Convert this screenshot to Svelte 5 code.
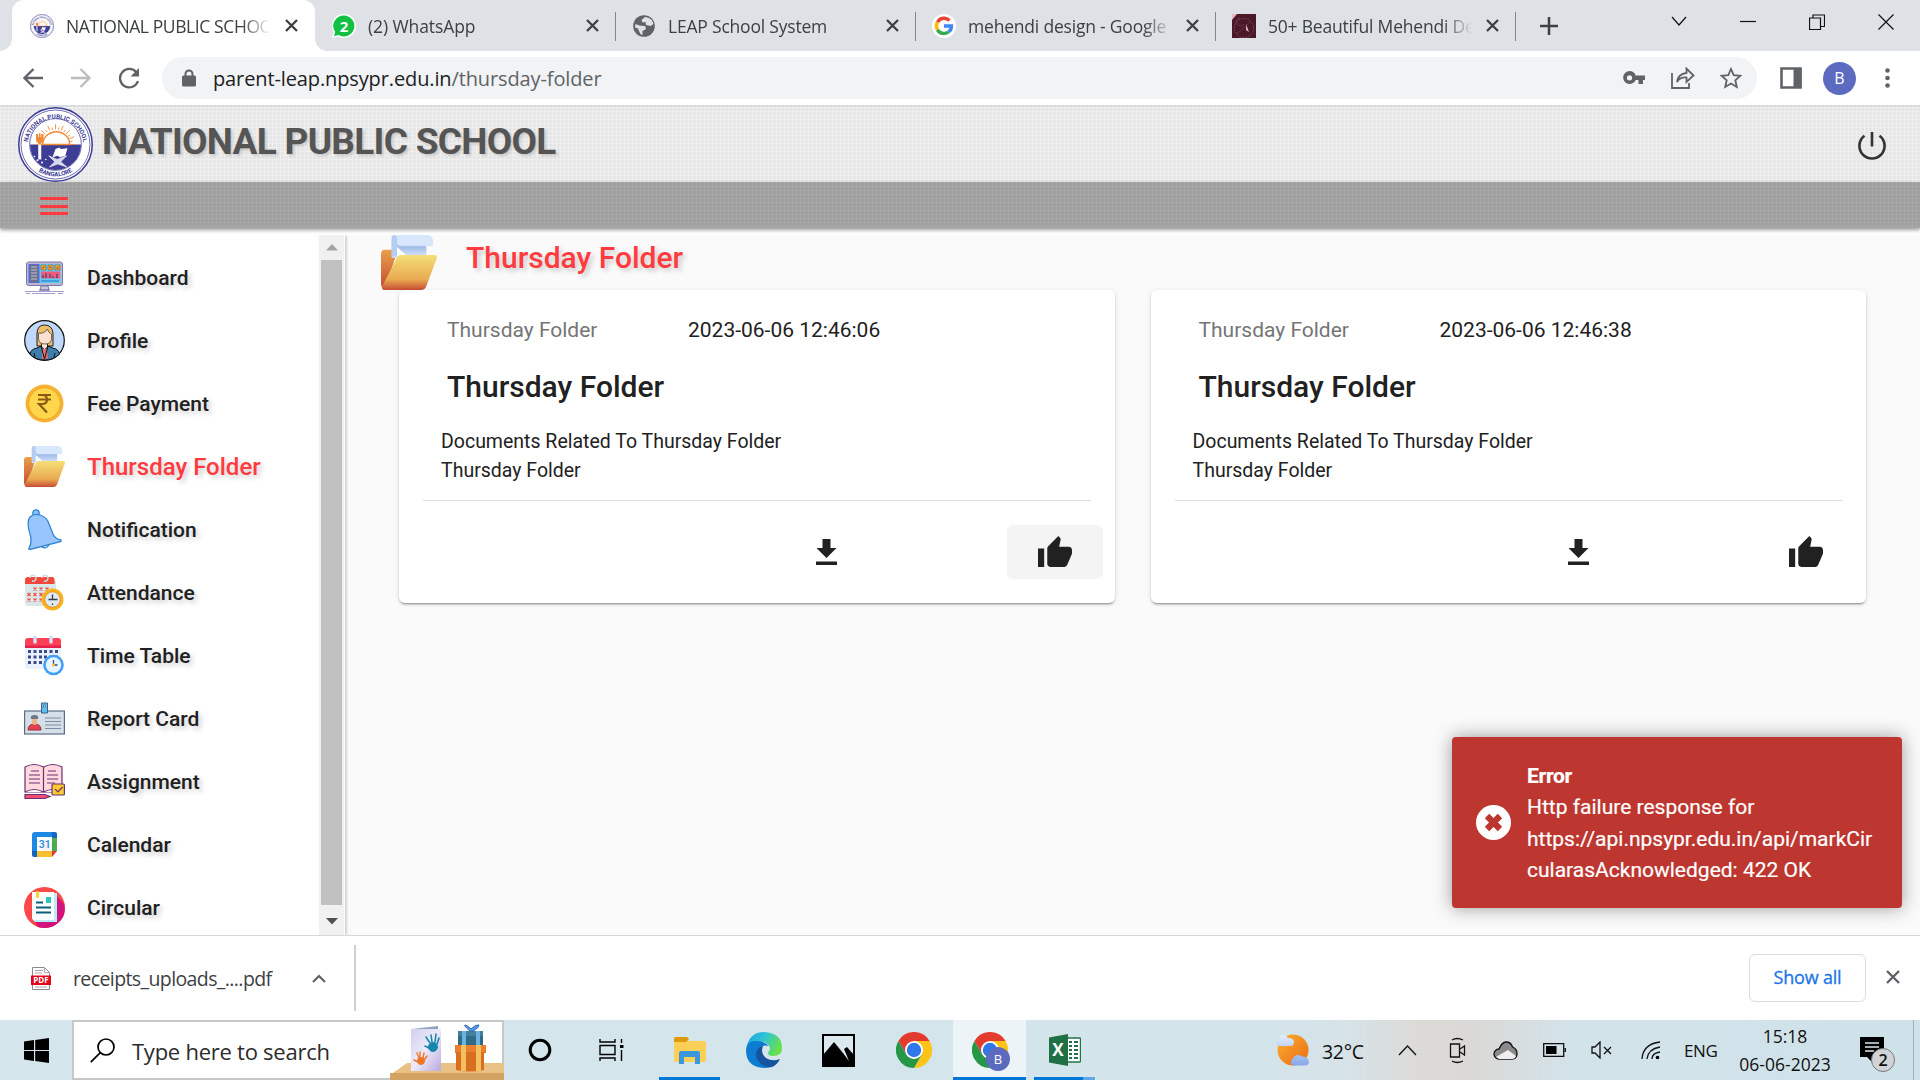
<script>
  const tabs = [
    { icon: 'school', title: 'NATIONAL PUBLIC SCHOO', active: true, kind: 't1' },
    { icon: 'whatsapp', title: '(2) WhatsApp', kind: 't2' },
    { icon: 'globe', title: 'LEAP School System', kind: 't3' },
    { icon: 'google', title: 'mehendi design - Google', kind: 't4' },
    { icon: 'mehendi', title: '50+ Beautiful Mehendi De', kind: 't5' }
  ];
  const menu = [
    { id: 'dashboard', label: 'Dashboard' },
    { id: 'profile', label: 'Profile' },
    { id: 'fee', label: 'Fee Payment' },
    { id: 'folder', label: 'Thursday Folder', active: true },
    { id: 'bell', label: 'Notification' },
    { id: 'attendance', label: 'Attendance' },
    { id: 'timetable', label: 'Time Table' },
    { id: 'report', label: 'Report Card' },
    { id: 'assignment', label: 'Assignment' },
    { id: 'calendar', label: 'Calendar' },
    { id: 'circular', label: 'Circular' }
  ];
  const cards = [
    { date: '2023-06-06 12:46:06', hovered: true },
    { date: '2023-06-06 12:46:38', hovered: false }
  ];
  const rays = Array.from({ length: 17 }, (_, i) => {
    const a = Math.PI + (i * Math.PI) / 16;
    const r = i % 2 ? 23 : 27;
    return [50 + 20 * Math.cos(a), 50 + 20 * Math.sin(a), 50 + r * Math.cos(a), 50 + r * Math.sin(a)];
  });
</script>

{#snippet crest()}
  <svg class="crest" viewBox="0 0 100 100">
    <circle cx="50" cy="50" r="49" fill="#fff" stroke="#3d3d96" stroke-width="2" />
    <circle cx="50" cy="50" r="46" fill="none" stroke="#3d3d96" stroke-width="1" />
    <circle cx="50" cy="50" r="34.5" fill="#fff" stroke="#3d3d96" stroke-width="1" />
    <path d="M16 50h68a34 34 0 0 1-68 0z" fill="#3d3d96" />
    <path d="M33 50a18 17 0 0 1 36 0z" fill="#fff" stroke="#f08a35" stroke-width="2" />
    {#each rays as r}
      <line x1={r[0]} y1={r[1]} x2={r[2]} y2={r[3]} stroke="#f08a35" stroke-width="1.2" />
    {/each}
    <path d="M24 36v7q0 4 3 5v3h4v-3q3-1 3-5v-7h-3v4h-1v-5h-2v5h-1v-4z" fill="#f08a35" />
    <path d="M27 50h4v20h-4z" fill="#fff" />
    <path d="M50 56l5-2 2 2 9-1-3 10-7 2-3-2-7 2z" fill="#fff" />
    <path d="M41 65l11 5 13-5-8 8 8 7-12-4-11 4 7-7z" fill="#d6d6ea" stroke="#fff" stroke-width=".8" />
    <circle cx="26" cy="71" r="1.3" fill="#fff" /><circle cx="32" cy="74" r="1.3" fill="#fff" />
    <circle cx="37" cy="70" r="1.1" fill="#fff" /><circle cx="22" cy="66" r="1.1" fill="#fff" />
    <defs>
      <path id="arcTop" d="M12.500 53a37.500 37.500 0 1 1 75 0" />
      <path id="arcBottom" d="M7.500 50a42.500 42.500 0 0 0 85 0" />
    </defs>
    <text class="crest-text"><textPath href="#arcTop" startOffset="50%">NATIONAL PUBLIC SCHOOL</textPath></text>
    <text class="crest-text"><textPath href="#arcBottom" startOffset="50%">BANGALORE</textPath></text>
  </svg>
{/snippet}

{#snippet crossIcon()}
  <svg width="13" height="13" viewBox="0 0 13 13" stroke="#3c4043" stroke-width="2.3"><path d="M1 1l11 11M12 1L1 12" /></svg>
{/snippet}

{#snippet folder()}
  <svg viewBox="0 0 42 41" preserveAspectRatio="none">
    <defs>
      <linearGradient id="fFront" x1="0" y1="0" x2="0" y2="1"><stop offset="0" stop-color="#f4df78" /><stop offset=".7" stop-color="#e9a950" /><stop offset="1" stop-color="#c94b33" /></linearGradient>
      <linearGradient id="fBack" x1="0" y1="0" x2="0" y2="1"><stop offset="0" stop-color="#eaa04c" /><stop offset="1" stop-color="#c3492f" /></linearGradient>
      <linearGradient id="fPaper" x1="0" y1="0" x2="0" y2="1"><stop offset="0" stop-color="#eef5ff" /><stop offset=".55" stop-color="#a3bfea" /><stop offset="1" stop-color="#dfe9fb" /></linearGradient>
    </defs>
    <path d="M0 14q0-3 3-3h5l3 5-8 24q-3 0-3-4z" fill="url(#fBack)" />
    <path d="M8 2q0-2 2-2h24q4 0 5 4v4H34v9H8z" fill="url(#fPaper)" />
    <path d="M11 0h23q4 0 5 4v4H15q-4 0-3-5z" fill="#d8e7fc" />
    <path d="M8 2q0-2 2-2t2 3v13H8z" fill="#b5cdf2" />
    <path d="M12 9l8 7h-8z" fill="#fff" />
    <path d="M12 17q.5-2 3-2h26q1 0 1 2l-8 21q-1 3-4 3H3q-3 0-2-3z" fill="url(#fFront)" />
  </svg>
{/snippet}

{#snippet menuIcon(id)}
  {#if id === 'folder'}
    {@render folder()}
  {:else if id === 'dashboard'}
    <svg viewBox="0 0 41 41">
      <rect x="2.500" y="5" width="36" height="23.500" rx="2" fill="#b9b7d4" stroke="#7d74a8" />
      <rect x="4.500" y="7" width="32" height="19" fill="#5ccdf5" />
      <rect x="4.500" y="7" width="11" height="19" fill="#5b6bd0" />
      <rect x="6" y="8" width="8" height="17" fill="#6c6f8c" />
      <path d="M7 10h6M7 13h6M7 16h6M7 19h6M7 22h6" stroke="#c6c6d8" />
      <path d="M17 8h5v5h-5zM24 8h5v5h-5zM31 8h5v5h-5z" fill="#f5a52b" stroke="#7a5a4a" stroke-width=".6" />
      <path d="M18.500 11l2-1M25.500 10l2 1M32.500 11h2" stroke="#5a4468" />
      <rect x="17" y="14.500" width="19" height="7" fill="#f15b78" />
      <path d="M19 21v-3M22 21v-5M26 21v-4M29 21v-2M33 21v-4" stroke="#5c4a80" stroke-width="1.500" />
      <path d="M17 24h18" stroke="#3e8fd8" stroke-width="1.600" />
      <path d="M17 29h7l1 4H16zM15 33h11" fill="#c9c7dd" stroke="#7d74a8" />
      <path d="M1 34.500h39M2 36.500h4M8 36.500h23M34 36.500h5" stroke="#8f86bb" stroke-width=".8" />
    </svg>
  {:else if id === 'profile'}
    <svg viewBox="0 0 41 41">
      <circle cx="20.500" cy="20.500" r="19.800" fill="#bfd8fb" stroke="#111" stroke-width="1.200" />
      <path d="M13 26V14q0-9 7.500-9T29 13v13z" fill="#efc06b" stroke="#222" />
      <path d="M17.500 20h6v11h-6z" fill="#fde2d3" stroke="#222" />
      <path d="M14.500 13q6 1 9-4 1 4 4 5v4q0 6-6.500 6T14.500 18z" fill="#fde0cf" stroke="#333" stroke-width=".7" />
      <path d="M6 34q1-5 7-6l4-2 3.500 4 4-4 4 2q6 1 7 6-6 6-15 6T6 34z" fill="#3f7fab" stroke="#111" />
      <path d="M18 29h5l1 10h-6z" fill="#e26e78" /><path d="M17 26l3.500 13L24 26M10 33l1 4M31 33l-1 4" fill="none" stroke="#111" />
    </svg>
  {:else if id === 'fee'}
    <svg viewBox="0 0 41 41">
      <circle cx="20.500" cy="20.500" r="19" fill="#f9b233" /><circle cx="20.500" cy="20.500" r="16" fill="#fdd64b" stroke="#eda32c" />
      <path d="M14 12h13M14 16.500h13M15 12h3q5 0 5 4.500T18 21h-3l8 8.500" fill="none" stroke="#8a5a12" stroke-width="2.200" />
    </svg>
  {:else if id === 'bell'}
    <svg viewBox="0 0 41 41" stroke="#2f86d1" stroke-width="1.300">
      <path d="M17 37a4.500 4.500 0 0 0 8-2" fill="#fff" />
      <circle cx="12" cy="4" r="3.200" fill="#8fc0fb" />
      <path d="M5 39q3-5 1.500-12Q2 13 6 8q4-4 10-2 7 2 9 9l4 10q2 5 8 6v1.500L6 40.500q-2 0-1-1.500z" fill="#99c5ff" />
    </svg>
  {:else if id === 'attendance'}
    <svg viewBox="0 0 41 41">
      <path d="M1 9h31v25H4q-3 0-3-3z" fill="#d9e8ea" /><path d="M4 5h24q2.500 0 2.500 3v4H1V8q0-3 3-3z" fill="#f0493a" />
      <path d="M8 9a3 3 0 1 0-2-3M20 9a3 3 0 1 0-2-3" fill="none" stroke="#c9dde6" stroke-width="1.400" />
      {#each [[10, 17], [16, 17], [22, 17], [4, 22.5], [10, 22.5], [16, 22.5], [4, 28], [10, 28], [16, 28]] as p}
        <path d="M{p[0] - 0.500} {p[1] - 1.500}l3 3m0-3l-3 3" stroke="#ef5245" stroke-width="1.300" />
      {/each}
      <circle cx="28.500" cy="27.500" r="11" fill="#fbb21c" /><circle cx="28.500" cy="27.500" r="7.800" fill="#dfe9f0" stroke="#e58d1f" />
      <path d="M28.500 22.500v5h5M28.500 27.500h-4M28.500 31.500v1.500" stroke="#333a4d" stroke-width="1.300" fill="none" />
    </svg>
  {:else if id === 'timetable'}
    <svg viewBox="0 0 41 41">
      <rect x="1" y="4" width="36" height="30" rx="3" fill="#e9f1ff" /><path d="M4 3h30q3 0 3 3v7H1V6q0-3 3-3z" fill="#ff4057" /><path d="M1 10.500h36V13H1z" fill="#e5204a" />
      <path d="M11 2v5M27 2v5" stroke="#cfe0f8" stroke-width="3.500" stroke-linecap="round" />
      {#each [15, 20.5, 26] as y}
        {#each [4, 9.5, 15, 20, 25.500, 31] as x}
          {#if x < 20 || y < 26}<rect {x} {y} width="3" height="3" fill="#3b4a86" />{/if}
        {/each}
      {/each}
      <circle cx="29.500" cy="30" r="10.300" fill="#3fa0f5" /><circle cx="29.500" cy="30" r="7.700" fill="#e8f4ff" />
      <path d="M29.500 25v5h4" stroke="#2c4f87" fill="none" stroke-width="1.300" /><circle cx="29.500" cy="30" r="1.500" fill="#f6c52c" />
    </svg>
  {:else if id === 'report'}
    <svg viewBox="0 0 41 41">
      <rect x=".6" y="13" width="39.800" height="23" fill="#d5dfe7" stroke="#5c6e87" stroke-width="1.200" />
      <path d="M17.500 5h6v10h-6z" fill="#5fc1ef" stroke="#3b5f88" /><rect x="19.500" y="7" width="2" height="2" fill="#fff" stroke="#2f4a70" stroke-width=".6" />
      <path d="M4 32q0-6 6.500-6T17 32z" fill="#e8414e" stroke="#8f3540" /><path d="M8 20h5v5q0 2-2.500 2T8 25z" fill="#edb98a" /><path d="M7 21q-1-4 3.500-4t3.500 4z" fill="#6d7689" />
      <path d="M21 20h16M21 23.500h16M21 27h16M21 30.500h16" stroke="#7c8ba0" />
    </svg>
  {:else if id === 'assignment'}
    <svg viewBox="0 0 41 41" stroke="#6d2f74" stroke-width="1.200">
      <path d="M1 6Q10 1 19.500 6 29 1 38 6v25H1z" fill="#ffd9de" /><path d="M1 31q9-5 18.500 0Q29 26 38 31" fill="#fff" />
      <path d="M19.500 6v25M7 10h8M5 14h11M5 18h11M5 22h11M24 10h8M23 14h11M23 18h11M23 22h8" fill="none" />
      <rect x="28" y="23" width="12.400" height="11" rx="1" fill="#fccb2f" /><path d="M31 28l3 3 4.500-5" fill="none" />
      <path d="M1 33.500h20l5 2-5 2H1z" fill="#f54d71" />
    </svg>
  {:else if id === 'calendar'}
    <svg viewBox="0 0 41 41">
      <path d="M8 11q0-3 3-3h17v6H14v14H8z" fill="#1e88e5" /><path d="M28 8h3q2 0 2 2v4h-5z" fill="#1565c0" />
      <path d="M28 14h5v13h-5z" fill="#4caf50" /><path d="M13 27h15v6H13z" fill="#fbc02d" /><path d="M8 27h5v6h-3q-2 0-2-2z" fill="#1565c0" /><path d="M28 27h5l-5 6z" fill="#e53935" />
      <path d="M13 13h15v14H13z" fill="#fff" />
      <text class="day" x="20.700" y="24">31</text>
    </svg>
  {:else}
    <svg viewBox="0 0 41 41">
      <circle cx="20.500" cy="20.500" r="20.500" fill="#fb4849" /><path d="M33 9l7 8q3 12-6 19-8 7-20 4l-3-5z" fill="#d3137b" />
      <path d="M9 6h24v29H11l-2-2z" fill="#b9ecf5" /><path d="M8 5h22v28H10q-2 0-2-2z" fill="#fafdff" />
      <path d="M12 4h3v6q-1.500 2-3 0z" fill="#fdd32f" /><rect x="22" y="10" width="5" height="6" fill="#2ec7be" />
      <path d="M12 15.500h7M12 20.500h15M12 25.500h15" stroke="#0d5f78" stroke-width="2" />
    </svg>
  {/if}
{/snippet}

{#snippet chrome()}
  <svg width="36" height="36" viewBox="0 0 36 36">
    <path d="M18 9h15.600A18 18 0 0 1 18 36l7.800-13.500z" fill="#fcc419" />
    <path d="M2.400 9A18 18 0 0 1 33.600 9H18L10.200 22.500z" fill="#e33b2e" />
    <path d="M2.400 9l7.800 13.500L18 27l7.800-4.500L18 36A18 18 0 0 1 2.400 9z" fill="#269747" />
    <circle cx="18" cy="18" r="9" fill="#fff" /><circle cx="18" cy="18" r="7.200" fill="#2e78ea" />
  </svg>
{/snippet}

<div class="screen">
  <div class="tabstrip">
    {#each tabs as tab}
      <div class="tab" class:active={tab.active}>
        <span class="fav">
          {#if tab.icon === 'school'}
            {@render crest()}
          {:else if tab.icon === 'whatsapp'}
            <svg viewBox="0 0 24 24"><path d="M12 0a12 12 0 1 1-6 22.400L0 24l1.600-6A12 12 0 0 1 12 0z" fill="#fff" /><path d="M12 1.500A10.500 10.500 0 1 1 6.500 21L2 22.300 3.200 18A10.500 10.500 0 0 1 12 1.500z" fill="#12c043" /><text class="wa" x="12" y="17.500">2</text></svg>
          {:else if tab.icon === 'globe'}
            <svg viewBox="0 0 24 24"><circle cx="12" cy="12" r="10.800" fill="#5f6368" /><path d="M3.500 10l4 1.500 5 .5q2 1 1 3.500l-3 1.500v4q-3-1-3.500-4l-1-2.500-3-1zM13 3l-3.500 3 1 2.500 3-.5.500 3 4.500 1 3-2q-1-6-8.500-7z" fill="#dee1e6" /></svg>
          {:else if tab.icon === 'google'}
            <svg viewBox="0 0 24 24"><circle cx="12" cy="12" r="12" fill="#fff" />
              <g fill="none" stroke-width="3.400"><path d="M17.500 6.500A7.500 7.500 0 0 0 5.500 8.200" stroke="#ea4335" /><path d="M5.500 8.200a7.500 7.500 0 0 0 0 7.600" stroke="#fbbc05" /><path d="M5.500 15.800a7.500 7.500 0 0 0 11.300 2" stroke="#34a853" /><path d="M16.800 17.800A7.300 7.300 0 0 0 19.500 12H12" stroke="#4285f4" /></g></svg>
          {:else}
            <svg viewBox="0 0 24 24"><rect width="24" height="24" fill="#4a1828" /><path d="M0 0h5L0 6zM14 10l3 8-3-2z" fill="#e8b9bb" /><circle cx="12" cy="14" r="9.500" fill="none" stroke="#8a5260" stroke-dasharray="1.500 1.500" /><path d="M8 4a4 4 0 1 0 4 6M5 20l14-13" stroke="#6f3848" fill="none" /></svg>
          {/if}
        </span>
        <span class="tab-title {tab.kind}">{tab.title}</span>
        <span class="tab-close">{@render crossIcon()}</span>
      </div>
    {/each}
    <svg class="plus" width="18" height="18" viewBox="0 0 18 18" stroke="#3c4043" stroke-width="2.500"><path d="M9 0v18M0 9h18" /></svg>
    <div class="controls">
      <svg width="16" height="16" viewBox="0 0 16 16"><path d="M1 3l7 8 7-8" /></svg>
      <svg width="16" height="16" viewBox="0 0 16 16"><path d="M0 7.500h16" /></svg>
      <svg width="16" height="16" viewBox="0 0 16 16"><path d="M.5 4h11v11.500H.500zM4 4V1h11.500v11.500H12" /></svg>
      <svg width="16" height="16" viewBox="0 0 16 16"><path d="M.5 .5l15 15M15.500 .5l-15 15" /></svg>
    </div>
  </div>

  <div class="toolbar">
    <svg width="20" height="20" viewBox="0 0 20 20" class="ln dark"><path d="M20 10H2M10.500 1L1.500 10l9 9" /></svg>
    <svg width="20" height="20" viewBox="0 0 20 20" class="ln light"><path d="M0 10h18M9.500 1l9 9-9 9" /></svg>
    <svg width="22" height="22" viewBox="0 0 22 22" class="ln dark"><path d="M18.500 5.500a9.200 9.200 0 1 0 1.500 8.500" /><path d="M21 1v8.500h-8.500z" fill="#5f6368" stroke="none" /></svg>
    <div class="omnibox">
      <svg width="14" height="18" viewBox="0 0 14 18"><path d="M3.500 7V5a3.500 3.500 0 0 1 7 0v2" fill="none" stroke="#5f6368" stroke-width="2" /><rect y="6.500" width="14" height="11" rx="1.500" fill="#5f6368" /></svg>
      <span class="url">parent-leap.npsypr.edu.in<span class="path">/thursday-folder</span></span>
      <span class="omni-icons">
        <svg width="23" height="14" viewBox="0 0 23 14"><path d="M6.500 0a6.500 6.500 0 0 1 6.200 4.500H22V9h-2v4h-4.500V9h-2.800A6.500 6.500 0 1 1 6.500 0zm0 4.200a2.600 2.600 0 1 0 0 5.200 2.600 2.600 0 0 0 0-5.200z" fill="#5f6368" /></svg>
        <svg width="24" height="22" viewBox="0 0 24 22" class="ln thin"><path d="M1 6v15h17v-5M6 15q1-8 9.500-9V1.500l7 7-7 6.500v-4.500Q9 10 6 15z" /></svg>
        <svg width="22" height="22" viewBox="0 0 22 22" class="ln thin"><path d="M11 2l2.700 6.200 6.600.6-5 4.500 1.500 6.700L11 16.500 5.200 20l1.500-6.700-5-4.500 6.600-.6z" /></svg>
      </span>
    </div>
    <svg class="panel" width="22" height="22" viewBox="0 0 22 22"><path d="M1.500 1.500h19v19h-19z" fill="#fff" stroke="#5f6368" stroke-width="2.600" /><path d="M13.500 1h8v20h-8z" fill="#5f6368" /></svg>
    <span class="avatar">B</span>
    <svg class="dots" width="5" height="20" viewBox="0 0 5 20" fill="#5f6368"><circle cx="2.500" cy="2.500" r="2.300" /><circle cx="2.500" cy="10" r="2.300" /><circle cx="2.500" cy="17.500" r="2.300" /></svg>
  </div>

  <header class="school">
    <div class="badge">{@render crest()}</div>
    <h1>NATIONAL PUBLIC SCHOOL</h1>
    <svg class="power" width="30" height="30" viewBox="0 0 30 30" fill="none" stroke="#333" stroke-width="2.600"><path d="M15 1v14.500M7.500 4.800a12.600 12.600 0 1 0 15 0" /></svg>
  </header>
  <div class="greybar"><span class="burger"><i></i><i></i><i></i></span></div>

  <div class="body">
    <nav>
      <ul>
        {#each menu as item}
          <li class:active={item.active}><span class="ico">{@render menuIcon(item.id)}</span>{item.label}</li>
        {/each}
      </ul>
      <div class="scroll">
        <svg width="12" height="7" viewBox="0 0 12 7"><path d="M6 0l6 6.500H0z" fill="#a3a3a3" /></svg>
        <div class="thumb"></div>
        <svg width="12" height="7" viewBox="0 0 12 7"><path d="M6 6.500L12 0H0z" fill="#505050" /></svg>
      </div>
    </nav>
    <main>
      <div class="heading"><span class="big">{@render folder()}</span><h2>Thursday Folder</h2></div>
      <div class="cards">
        {#each cards as card}
          <article>
            <div class="meta"><span>Thursday Folder</span><time>{card.date}</time></div>
            <h3>Thursday Folder</h3>
            <p>Documents Related To Thursday Folder<br />Thursday Folder</p>
            <hr />
            <div class="actions">
              <svg class="dl" width="21" height="26" viewBox="0 0 21 26" fill="#212121"><path d="M6.500 0h8v9h6L10.500 19 .500 9h6zM0 22.500h21V26H0z" /></svg>
              <span class="like" class:hovered={card.hovered}>
                <svg width="34" height="31" viewBox="1 1 22 20" fill="#212121"><path d="M1 21h4V9H1v12zm22-11c0-1.100-.9-2-2-2h-6.310l.95-4.570.03-.32c0-.41-.17-.79-.44-1.060L14.170 1 7.590 7.590C7.220 7.950 7 8.450 7 9v10c0 1.100.9 2 2 2h9c.83 0 1.540-.5 1.840-1.220l3.020-7.050c.09-.23.14-.47.14-.73v-2z" /></svg>
              </span>
            </div>
          </article>
        {/each}
      </div>
    </main>
    <div class="toast">
      <svg width="35" height="35" viewBox="0 0 35 35"><circle cx="17.500" cy="17.500" r="17.500" fill="#fff" /><path d="M11 11l13 13M24 11L11 24" stroke="#bd362f" stroke-width="6.200" /></svg>
      <div class="message"><b>Error</b><br />Http failure response for<br />https://api.npsypr.edu.in/api/markCir<br />cularasAcknowledged: 422 OK</div>
    </div>
  </div>

  <div class="downloads">
    <svg width="20" height="23" viewBox="0 0 20 23"><path d="M1.500 .5h12l5 5v17h-17z" fill="#fff" stroke="#8c8c8c" /><path d="M13.500 .5v5h5M4 3.500h8M4 6h7M4 20h12" fill="none" stroke="#aaa" /><rect y="8.500" width="20" height="9.500" fill="#e2061b" /><text class="pdf" x="10" y="16.200">PDF</text></svg>
    <span class="file">receipts_uploads_....pdf</span>
    <svg width="14" height="9" viewBox="0 0 14 9" fill="none" stroke="#5f6368" stroke-width="2.200"><path d="M1 8l6-6 6 6" /></svg>
    <span class="rule"></span>
    <span class="showall">Show all</span>
    <svg class="dlclose" width="14" height="14" viewBox="0 0 14 14" stroke="#5f6368" stroke-width="2.400"><path d="M1 1l12 12M13 1L1 13" /></svg>
  </div>

  <div class="taskbar">
    <div class="start"><svg width="25" height="25" viewBox="0 0 25 25"><path d="M0 3.500l10-1.400v10H0zM11.200 1.900L25 0v12.100H11.200zM0 13.100h10v10L0 21.600zM11.200 13.100H25V25l-13.800-1.900z" /></svg></div>
    <div class="search">
      <svg width="25" height="25" viewBox="0 0 25 25" fill="none" stroke="#000" stroke-width="1.700"><circle cx="16" cy="9" r="8" /><path d="M10.300 14.700L.8 24.200" /></svg>
      <span>Type here to search</span>
      <svg class="gifts" width="114" height="58" viewBox="0 0 114 58">
        <defs><linearGradient id="paper" x1="0" y1="0" x2="1" y2="1"><stop offset="0" stop-color="#cfd0ee" /><stop offset=".5" stop-color="#eceafa" /><stop offset="1" stop-color="#b9a9dc" /></linearGradient></defs>
        <path d="M17 41h97v12H0z" fill="#e9c184" /><path d="M0 51h114v7H0z" fill="#d2a260" />
        <path d="M22 7L48 4v4H51v40H21z" fill="#90a4bb" /><rect x="21" y="7" width="30" height="42" fill="url(#paper)" />
        <g fill="#1687ab" stroke="#1687ab" stroke-linecap="round"><ellipse cx="43" cy="25" rx="4.500" ry="4.500" /><path d="M40 21l-4-6M42 20l-1-7M45 20l1-8M47 22l2-6M39 26l-4-2" stroke-width="1.600" /></g>
        <g fill="#ef7423" stroke="#ef7423" stroke-linecap="round"><ellipse cx="31" cy="39" rx="3.500" ry="3.500" /><path d="M29 36l-2-5M30 36l0-6M33 36l1-5M34 38l3-4M28 40l-4-2" stroke-width="1.400" /></g>
        <path d="M65 23h31v8h-2v17q-14 3-28 0V31h-1z" fill="#d96d20" /><path d="M65 23h31v7H65z" fill="#e8802f" /><path d="M71 23h5v26h-5zM86 23h5v26h-5z" fill="#f4c05f" />
        <path d="M68 10h25v13H68z" fill="#2f6a87" /><path d="M68 9h25v5H68z" fill="#417f9c" /><path d="M72 9h4v14h-4zM86 9h4v14h-4z" fill="#6bb2e0" />
        <path d="M80 9q-7-6-5-6t6 4q5-5 8-4 0 3-6 6z" fill="#5d9bea" stroke="#2b69b8" />
      </svg>
    </div>
    <div class="slot cortana"><svg width="24" height="24" viewBox="0 0 24 24"><circle cx="12" cy="12" r="9.800" fill="none" stroke="#000" stroke-width="3" /></svg></div>
    <div class="slot taskview"><svg width="25" height="24" viewBox="0 0 25 24" fill="none" stroke="#000" stroke-width="1.400"><path d="M1 1v3h15V1M1 23v-3h15v3M1 7.500h15v9H1zM22.500 1v4M22.500 12v11" /><path d="M21 7h3.500v3H21z" fill="#000" stroke="none" /></svg></div>
    <div class="slot w1 run">
      <svg width="32" height="27" viewBox="0 0 32 27"><path d="M0 2q0-2 2-2h11l2 4h15q2 0 2 2v17q0 2-2 2H2q-2 0-2-2z" fill="#fccf57" /><path d="M0 2q0-2 2-2h11l2 2-3 3H0z" fill="#dd9a0a" /><path d="M5 27V16q0-2 2-2h17q2 0 2 2v11h-5v-7H10v7z" fill="#3a96dd" /></svg>
    </div>
    <div class="slot w2">
      <svg width="36" height="36" viewBox="0 0 36 36">
        <defs><linearGradient id="edgeA" x1="0" y1="0" x2="1" y2=".4"><stop offset="0" stop-color="#1f9fe0" /><stop offset=".5" stop-color="#2fc3d8" /><stop offset="1" stop-color="#66e04d" /></linearGradient></defs>
        <path d="M1 13Q5 0 18 0q18 1 18 16 0 8-9 8-5 0-5-3l2-4q0-5-6-7-9-2-17 3z" fill="url(#edgeA)" />
        <path d="M0 18q0-9 10-9 9 0 13 5-9-2-9 6 0 12 12 15-4 1-8 1Q0 35 0 18z" fill="#0c7bd2" />
        <path d="M14 15q-6 5-3 12 5 9 15 8 5-2 8-8-8 3-14-1-6-5-3-12z" fill="#15539e" />
      </svg>
    </div>
    <div class="slot w3"><svg width="33" height="33" viewBox="0 0 33 33"><path d="M1 1h31v31H1z" fill="#dceaf0" stroke="#000" stroke-width="2" /><path d="M1 21L12 8l9 11 6 8-5-12 3-2 7 8v11H1z" /></svg></div>
    <div class="slot w2">{@render chrome()}</div>
    <div class="slot w4 run current">{@render chrome()}<span class="mini">B</span></div>
    <div class="slot w5 run excel">
      <svg width="32" height="32" viewBox="0 0 32 32"><rect x="15" y="4" width="16.500" height="24" rx="1" fill="#fff" stroke="#217346" stroke-width="1.400" /><path d="M20 8h3M25 8h4M20 12h3M25 12h4M20 16h3M25 16h4M20 20h3M25 20h4M20 24h3M25 24h4" stroke="#217346" stroke-width="2.200" /><path d="M0 3.500L19 0v32L0 28.500z" fill="#1f7145" /><text class="xl" x="9" y="22">X</text></svg>
    </div>
    <div class="tray">
      <svg class="weather" width="36" height="36" viewBox="0 0 36 36"><defs><linearGradient id="sun" x1="0" y1="0" x2="1" y2="1"><stop offset="0" stop-color="#f9b030" /><stop offset="1" stop-color="#ec6a14" /></linearGradient><linearGradient id="cl" x1="0" y1="0" x2="0" y2="1"><stop offset="0" stop-color="#e3edff" /><stop offset="1" stop-color="#86a7ea" /></linearGradient></defs><circle cx="19" cy="19" r="15.500" fill="url(#sun)" /><path d="M4 15a4 4 0 0 1 0-7 5.500 5.500 0 0 1 10-1q6 0 6 4t-4 4zM19 34.500a4 4 0 0 1 0-7 5.500 5.500 0 0 1 9-2q6 0 7 5 0 4-4 4z" fill="url(#cl)" /></svg>
      <span class="temp">32°C</span>
      <svg class="i1" width="19" height="11" viewBox="0 0 19 11"><path d="M1 10l8.500-9L18 10" /></svg>
      <svg class="i2" width="18" height="27" viewBox="0 0 18 27"><path d="M3 3q5-3 11 0M3 24q5 3 11 0M1.500 7h9v13h-9zM11 12l4.500-3v9L11 15" /></svg>
      <svg class="i3" width="25" height="19" viewBox="0 0 25 19"><path d="M6 18a5 5 0 0 1 0-10Q9 1 13 1q5 0 6.500 5Q24 8 24 12.500 24 18 19 18z" fill="#8a8a8a" /><path d="M3 16l12-7 8 6q-1 3-4 3H6z" fill="#eee" stroke="none" /></svg>
      <svg class="i4" width="23" height="14" viewBox="0 0 23 14"><path d="M.7 .7h20v12.600h-20zM22.300 5v4" /><path d="M3 3h10.500v8H3z" fill="#000" stroke="none" /></svg>
      <svg class="i5" width="21" height="18" viewBox="0 0 21 18"><path d="M1 6h3l5-5v16l-5-5H1zM13 6l7 7M20 6l-7 7" /></svg>
      <svg class="i6" width="20" height="19" viewBox="0 0 20 19"><path d="M1 18Q2 3 19 1M6 18Q7 8 19 6M11 18q0-6 8-7" /><circle cx="16.500" cy="16.500" r="1.800" fill="#000" stroke="none" /></svg>
      <span class="eng">ENG</span>
      <span class="clock">15:18<br />06-06-2023</span>
      <span class="action"><svg width="24" height="27" viewBox="0 0 24 27"><path d="M0 0h24v20H13v6l-6-6H0z" fill="#000" stroke="none" /><path d="M5 6h14M5 10h14M5 14h9" stroke="#dbe7ec" /></svg><span class="count">2</span></span>
      <span class="edge"></span>
    </div>
  </div>
</div>

<style>
  :global(body) { margin: 0; overflow: hidden; }
  * { box-sizing: border-box; }
  svg { display: block; flex: none; }
  .screen { width: 1920px; height: 1080px; display: flex; flex-direction: column; background: #fff; font-family: 'Open Sans', 'Noto Sans', sans-serif; overflow: hidden; }

  .tabstrip { height: 51px; background: #dee1e6; display: flex; padding-left: 12px; flex: none; }
  .tab { width: 300px; display: flex; align-items: center; position: relative; padding-left: 17px; flex: none; }
  .tab.active { width: 303px; background: #fff; border-radius: 12px 12px 0 0; }
  .tab.active::before, .tab.active::after { content: ''; position: absolute; bottom: 0; width: 12px; height: 12px; }
  .tab.active::before { left: -12px; background: radial-gradient(circle at 0 0, transparent 11.5px, #fff 12px); }
  .tab.active::after { right: -12px; background: radial-gradient(circle at 100% 0, transparent 11.5px, #fff 12px); }
  .tab:not(.active)::after { content: ''; position: absolute; right: -1px; top: 12px; width: 1px; height: 29px; background: #80868b; }
  .fav { width: 24px; height: 24px; flex: none; }
  .fav svg, .crest { width: 100%; height: 100%; }
  .ico svg, .big svg { width: 100%; height: 100%; }
  .tab.active .fav { margin-left: 1px; }
  .wa { font: 700 15px 'Open Sans', sans-serif; fill: #fff; text-anchor: middle; }
  .tab-title { font-size: 17.5px; color: #3c4043; white-space: nowrap; width: 206px; margin-left: 12px; line-height: 30px; letter-spacing: -.2px; mask-image: linear-gradient(90deg, #000 176px, transparent 204px); }
  .t1 { letter-spacing: -.4px; }
  .t2 { letter-spacing: -.1px; }
  .tab-close { margin-left: 12px; }
  .tab.active .tab-close { margin-left: 13px; }
  .plus { margin: 17px 0 0 25px; }
  .controls { margin-left: auto; display: flex; gap: 53px; padding: 14px 26px 0 0; fill: none; stroke: #111; stroke-width: 1.2; }

  .toolbar { height: 56px; border-bottom: 2px solid #dadce0; display: flex; align-items: center; padding: 0 30px 0 23px; flex: none; }
  .ln { fill: none; stroke-width: 2.3; }
  .dark { stroke: #5f6368; }
  .light { stroke: #bbbdbf; margin: 0 27px 0 28px; }
  .thin { stroke: #5f6368; stroke-width: 1.8; }
  .omnibox { width: 1595px; height: 42px; border-radius: 21px; background: #f1f3f4; margin-left: 22px; display: flex; align-items: center; padding: 0 15px 0 20px; flex: none; }
  .url { font-size: 20px; color: #202124; margin-left: 17px; letter-spacing: -.12px; white-space: nowrap; }
  .path { color: #5f6368; }
  .omni-icons { margin-left: auto; display: flex; gap: 25px; align-items: center; }
  .panel { margin-left: 23px; }
  .avatar { width: 33px; height: 33px; border-radius: 50%; background: #5c6bc0; color: #fff; font-size: 16px; text-align: center; line-height: 33px; margin-left: 21px; }
  .dots { margin-left: 29px; }

  .school { height: 75px; flex: none; display: flex; align-items: center; padding: 0 33px 0 18px; background-color: #efefef; background-image: linear-gradient(90deg, rgba(239, 239, 239, 1) 1px, transparent 1px), linear-gradient(rgba(239, 239, 239, 1) 1px, #e6e6e6 1px); background-size: 4px 4px; font-family: Roboto, sans-serif; }
  .badge { width: 75px; height: 75px; }
  .crest-text { font: 700 8.3px Roboto, sans-serif; fill: #3d3d96; text-anchor: middle; }
  h1 { margin: -5px 0 0 9px; font-size: 37px; line-height: 44px; font-weight: 700; color: #555; letter-spacing: -.7px; text-shadow: 2px 2px 3px rgba(0, 0, 0, .15); white-space: nowrap; }
  .power { margin: 2px 0 0 auto; }
  .greybar { height: 46px; flex: none; padding: 15px 0 0 40px; background-color: #a8a8a8; background-image: linear-gradient(90deg, #a8a8a8 1px, transparent 1px), linear-gradient(#a8a8a8 1px, #9f9f9f 1px); background-size: 4px 4px; box-shadow: 0 2px 4px rgba(0, 0, 0, .4); position: relative; z-index: 1; }
  .burger { display: flex; flex-direction: column; gap: 4.5px; width: 28px; }
  .burger i { height: 3px; background: #ff3b3f; }

  .body { flex: 1; min-height: 0; display: flex; background: linear-gradient(#fff 7px, #fafafa 7px); position: relative; padding-top: 7px; font-family: Roboto, sans-serif; color: #212121; border-bottom: 1px solid #d5d7d9; }
  nav { width: 345px; background: #fff; display: flex; justify-content: space-between; flex: none; box-shadow: 1px 0 3px rgba(0, 0, 0, .25); clip-path: inset(0 -8px 0 0); }
  ul { list-style: none; margin: 0; padding: 11px 0 0 24px; }
  li { height: 63px; display: flex; align-items: center; gap: 22px; font-size: 21px; font-weight: 500; white-space: nowrap; text-shadow: 3px 3px 5px rgba(0, 0, 0, .2); }
  li.active { color: #ff3b3f; font-size: 24px; }
  .ico { width: 41px; height: 41px; flex: none; }
  .day { font: 500 10.5px Roboto, sans-serif; fill: #1e88e5; text-anchor: middle; }
  .scroll { width: 25px; background: #f1f1f1; display: flex; flex-direction: column; align-items: center; margin-right: 1px; padding: 9px 0 10px; }
  .thumb { width: 21px; flex: 1; background: #c1c1c1; margin: 9px 0 13px; }
  main { flex: 1; padding-left: 36px; }
  .heading { display: flex; height: 55px; }
  .big { width: 56px; height: 55px; }
  h2 { margin: 5px 0 0 29px; color: #ff3b3f; font-size: 30px; line-height: 36px; font-weight: 500; text-shadow: 3px 3px 5px rgba(0, 0, 0, .2); }
  .cards { display: flex; gap: 36px; padding-left: 18px; }
  article { width: 715.5px; height: 312.5px; background: #fff; border-radius: 6px; padding: 25px 24px 22px; box-shadow: 0 3px 1px -2px rgba(0, 0, 0, .2), 0 2px 2px rgba(0, 0, 0, .14), 0 1px 5px rgba(0, 0, 0, .12); }
  .meta { display: flex; font-size: 21px; line-height: 30px; padding-left: 24px; }
  .meta span { width: 241px; color: #757575; }
  h3 { margin: 22px 0 0 24px; font-size: 30px; line-height: 40px; font-weight: 500; }
  p { margin: 20px 0 0 18px; font-size: 19.5px; line-height: 29px; }
  hr { margin: 15px 0 0; border: 0; height: 1px; background: #dedede; }
  .actions { display: flex; align-items: center; margin: 24px -12px 0 0; height: 54px; }
  .dl { margin-left: 393px; }
  .like { margin-left: auto; width: 96px; height: 54px; border-radius: 6px; display: flex; align-items: center; justify-content: center; padding-bottom: 2px; }
  .hovered { background: #f4f4f4; }
  .toast { position: absolute; left: 1452px; top: 509px; width: 450px; height: 171px; border-radius: 4px; background: #bd362f; box-shadow: 0 0 18px #999; color: #fff; display: flex; align-items: center; gap: 16px; padding-left: 24px; font-size: 21px; line-height: 31.5px; white-space: nowrap; -webkit-text-stroke: .2px #fff; }
  .message { padding-top: 2px; }
  b { letter-spacing: -.3px; }

  .downloads { height: 84px; flex: none; display: flex; align-items: center; padding-left: 31px; background: #fff; color: #3c4043; }
  .pdf { font: 700 8px 'Open Sans', sans-serif; fill: #fff; text-anchor: middle; }
  .file { width: 201px; margin: 0 38px 0 22px; font-size: 19.5px; letter-spacing: -.6px; white-space: nowrap; }
  .rule { width: 2px; height: 66px; background: #cfcfcf; margin-left: 28px; }
  .showall { margin-left: auto; margin-top: -1px; width: 117px; height: 48px; border: 1px solid #dadce0; border-radius: 6px; color: #1a73e8; font-size: 18px; line-height: 44px; text-align: center; letter-spacing: -.2px; -webkit-text-stroke: .3px #1a73e8; }
  .dlclose { margin: -2px 20px 0; }

  .taskbar { height: 60px; flex: none; display: flex; background: linear-gradient(90deg, #d5e6ed 0, #d3e5eb 65%, #d6e3e8 70%, #dcdad6 74%, #dad9d7 77%, #d3e3ea 82%, #cfe2e9 100%); }
  .start { width: 72px; display: flex; align-items: center; justify-content: center; }
  .search { width: 432px; background: #fff; border: 2px solid #c8c8c8; display: flex; align-items: center; padding-left: 16px; position: relative; }
  .search span { font-size: 22px; color: #2b2b2b; margin-left: 17px; white-space: nowrap; letter-spacing: -.25px; padding-top: 2px; }
  .gifts { position: absolute; right: -2px; bottom: -2px; }
  .slot { width: 72px; display: flex; align-items: center; justify-content: center; position: relative; }
  .taskview { width: 74px; padding-right: 3px; }
  .w1 { width: 61px; margin-left: 9px; }
  .w2 { width: 74px; margin-left: 7px; }
  .w3 { width: 74px; }
  .w3 + .w2 { margin-left: 2px; }
  .w4 { width: 73px; margin-left: 2px; }
  .w5 { width: 61px; margin-left: 8px; }
  .run::after { content: ''; position: absolute; left: 0; right: 0; bottom: 0; height: 3px; background: #0078d7; }
  .excel::after { background: linear-gradient(90deg, #0078d7 49px, #5fa8e5 49px); }
  .current { background: #edf4f7; }
  .mini { position: absolute; left: 33px; top: 27px; width: 24px; height: 24px; border-radius: 50%; background: #5c6bc0; color: #fff; font-size: 13px; line-height: 24px; text-align: center; }
  .xl { font: 700 17px 'Open Sans', sans-serif; fill: #fff; text-anchor: middle; }
  .tray { flex: 1; display: flex; align-items: center; font-size: 17.5px; color: #111; fill: none; stroke-width: 1.3; }
  .tray > svg:not(.weather) { stroke: #111; }
  .weather { margin: -3px 0 0 179px; }
  .temp { margin-left: 12px; width: 45px; font-size: 19.5px; padding-top: 2px; letter-spacing: -.3px; white-space: nowrap; }
  .i1 { margin-left: 31px; }
  .i2 { margin-left: 32px; }
  .i3 { margin-left: 26px; }
  .i4 { margin-left: 25px; }
  .i5 { margin-left: 25px; }
  .i6 { margin-left: 29px; }
  .eng { margin-left: 23px; width: 34px; font-size: 17px; letter-spacing: -.4px; }
  .clock { width: 96px; margin-left: 19px; text-align: center; line-height: 28px; letter-spacing: 0; white-space: nowrap; }
  .action { position: relative; margin-left: 27px; }
  .count { position: absolute; left: 11px; top: 11px; width: 24px; height: 24px; border: 1px solid #777; border-radius: 50%; background: #d0d4d6; font-size: 16px; font-weight: 600; line-height: 22px; text-align: center; }
  .edge { margin-left: auto; margin-right: 6px; width: 1px; height: 60px; background: #9fb2ba; }
</style>
